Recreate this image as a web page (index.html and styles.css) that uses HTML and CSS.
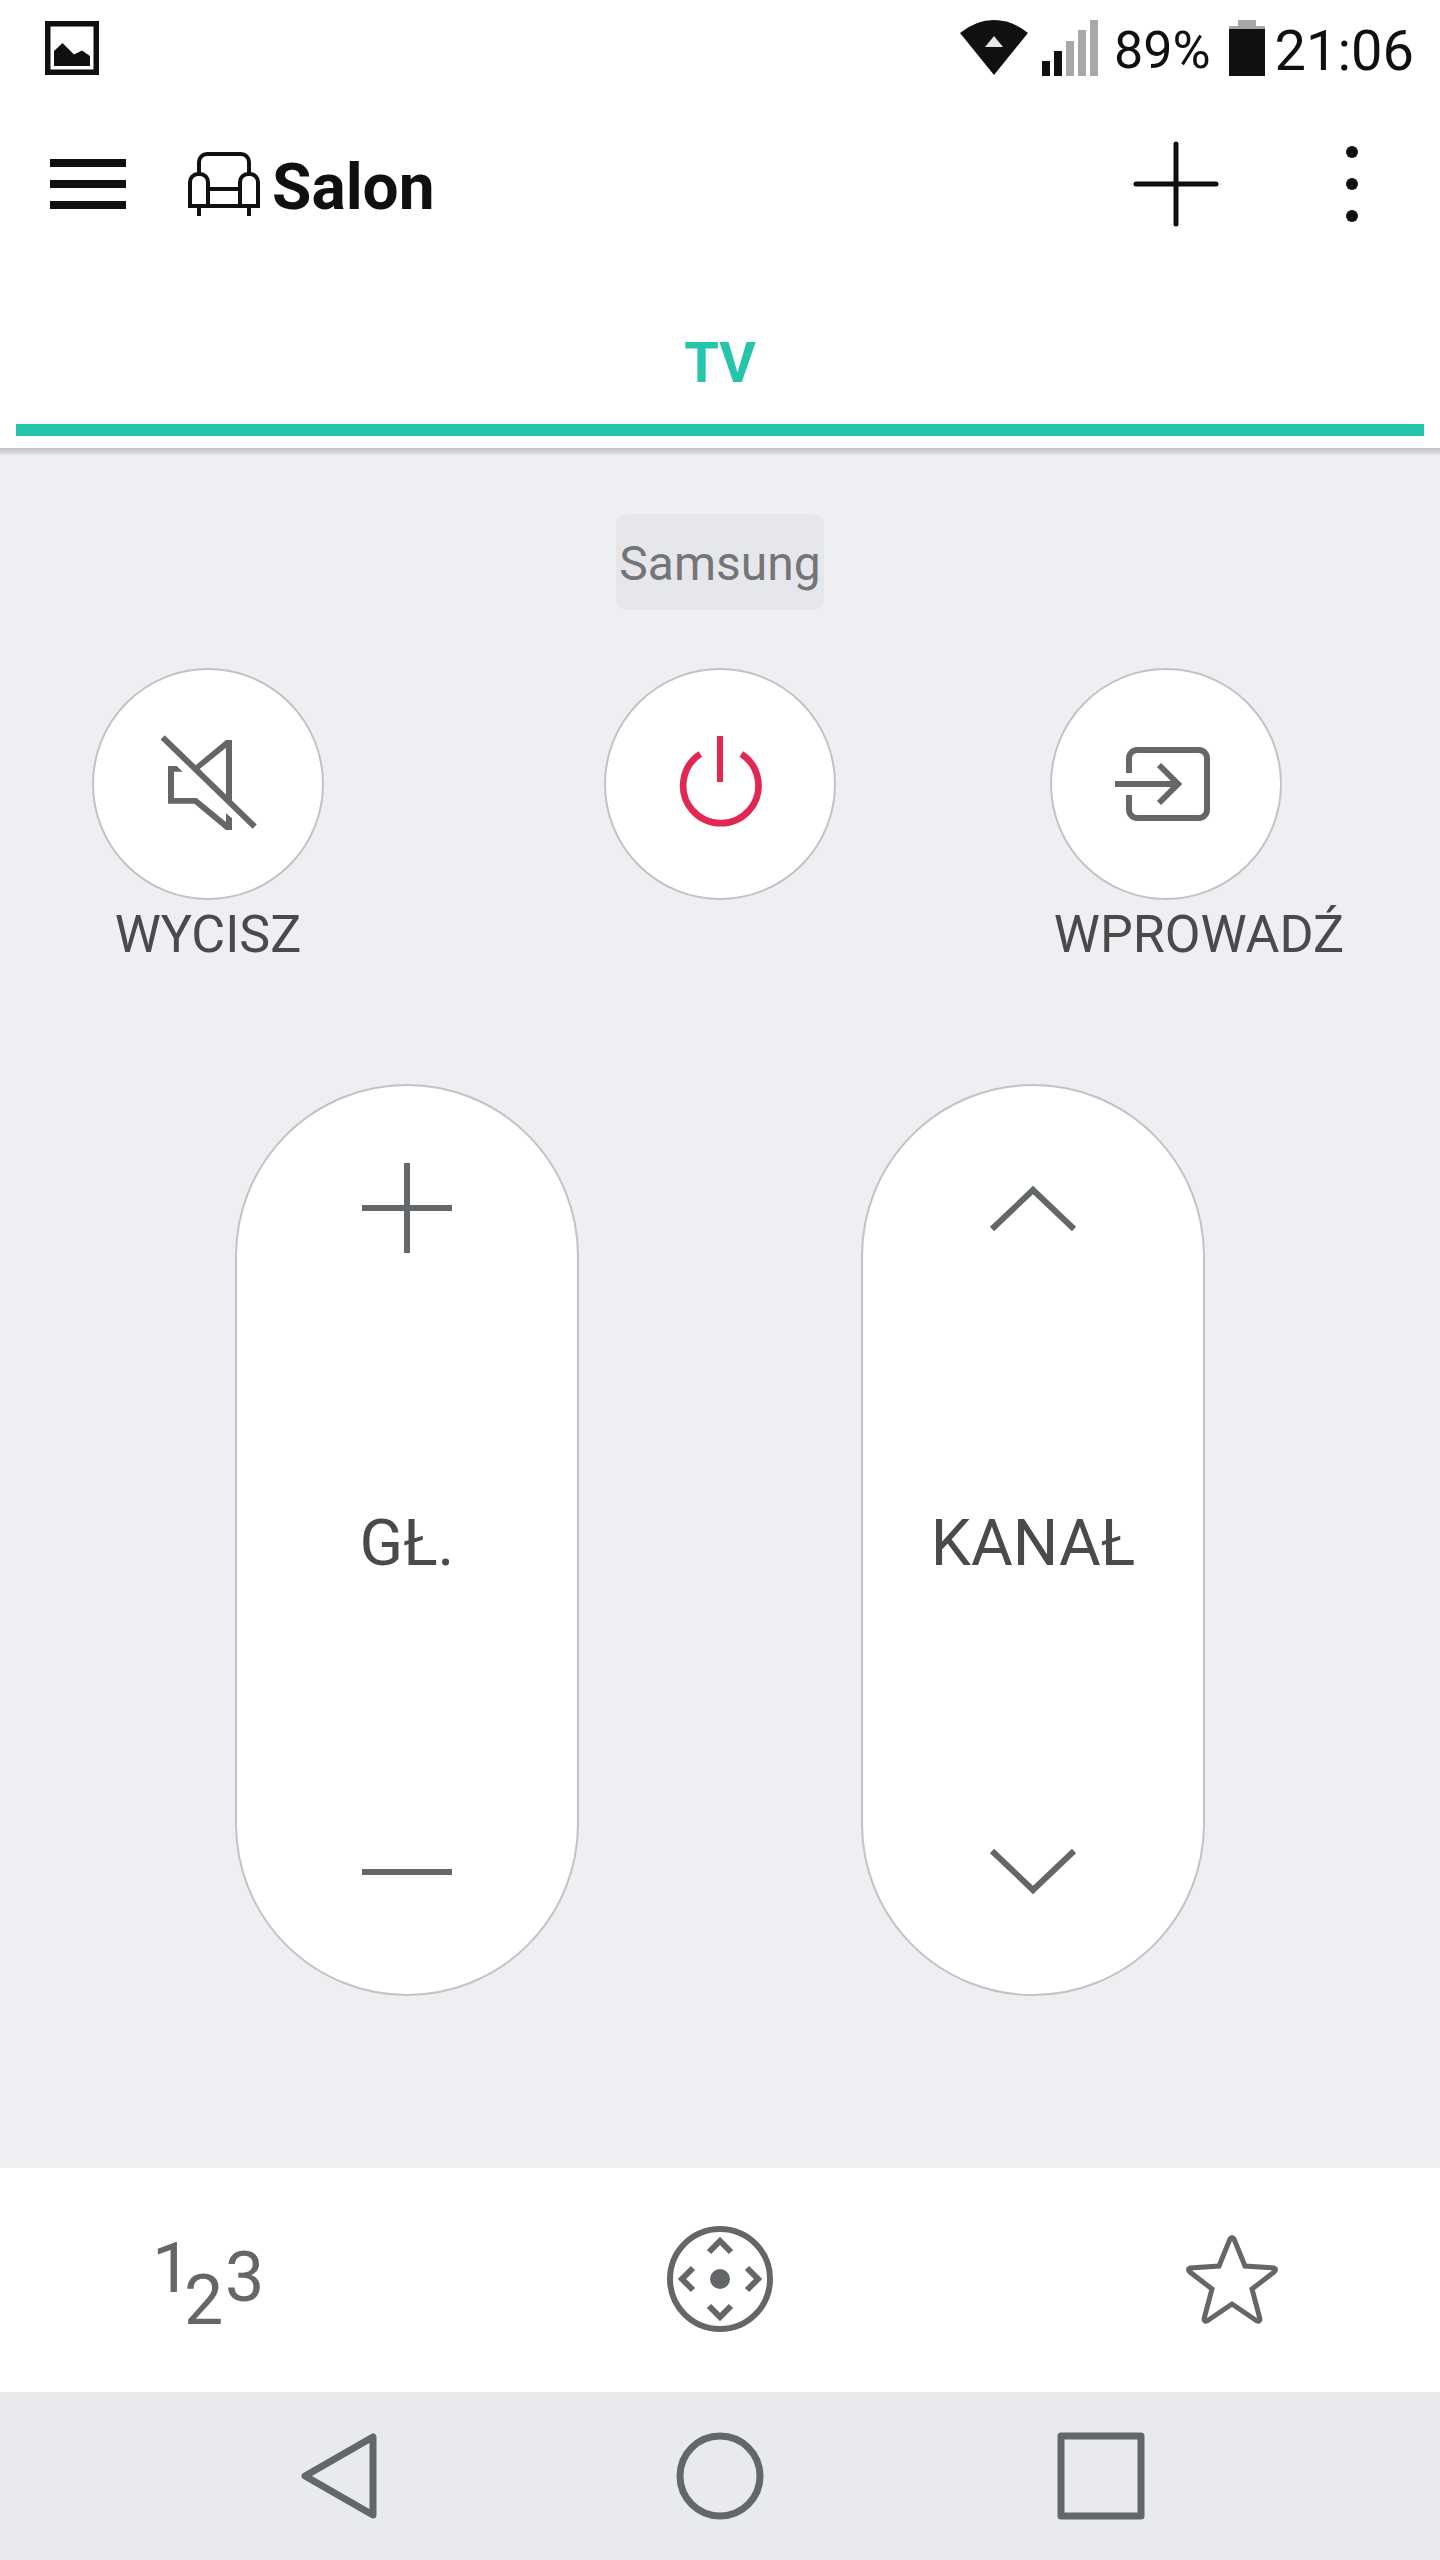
FILE: index.html
```html
<!DOCTYPE html>
<html lang="pl">
<head>
<meta charset="utf-8">
<meta name="viewport" content="width=device-width, initial-scale=1">
<title>Salon</title>
<link rel="stylesheet" href="styles.css">
</head>
<body>
<div class="screen">
  <header class="header">
    <div class="status">
      <svg class="status-photo" width="54" height="54" viewBox="0 0 54 54" aria-hidden="true">
        <rect x="2.75" y="2.75" width="48.5" height="48.5" fill="none" stroke="currentColor" stroke-width="5.5"/>
        <path d="M9 45V30l8.500-8L29 33.500l8-4 8 5.500v10z" fill="currentColor"/>
      </svg>
      <div class="status-info">
        <svg width="68" height="56" viewBox="0 0 68 56" aria-hidden="true">
          <path d="M0 13Q16 0 34 0T68 13L34 55z" fill="currentColor"/>
          <path d="M34 16l9 11H25z" fill="#e5e6ea"/>
        </svg>
        <svg class="signal" width="56" height="56" viewBox="0 0 56 56" aria-hidden="true">
          <path d="M0 41h8v15H0zM12 31h8v25h-8z" fill="currentColor"/>
          <path d="M24 21h8v35h-8zM36 10h8v46h-8zM48 0h8v56h-8z" fill="#a6a7a7"/>
        </svg>
        <span class="percent">89%</span>
        <svg class="battery" width="36" height="56" viewBox="0 0 36 56" aria-hidden="true">
          <path d="M9 0h18v6h9v4H0V6h9z" fill="#a6a7a7"/>
          <path d="M0 9h36v47H0z" fill="currentColor"/>
        </svg>
        <span class="clock">21:06</span>
      </div>
    </div>
    <div class="appbar">
      <button class="icon-button" type="button" aria-label="Menu">
        <svg width="76" height="52" viewBox="0 0 76 52"><path d="M0 1h76v8H0zM0 22h76v8H0zM0 43h76v8H0z" fill="currentColor"/></svg>
      </button>
      <h1 class="title">
        <svg width="72" height="64" viewBox="0 0 72 64" fill="none" stroke="currentColor" stroke-width="4" aria-hidden="true">
          <path d="M11 21V10a8 8 0 0 1 8-8h34a8 8 0 0 1 8 8v11M2 54V30a8 8 0 0 1 8-8h2a8 8 0 0 1 8 8v24M52 54V30a8 8 0 0 1 8-8h2a8 8 0 0 1 8 8v24M20 37h32M0 54h72M11 54v10M61 54v10"/>
        </svg>
        <span>Salon</span>
      </h1>
      <button class="icon-button" type="button" aria-label="Dodaj">
        <svg width="86" height="86" viewBox="0 0 86 86"><path d="M43 3v80M3 43h80" fill="none" stroke="currentColor" stroke-width="5" stroke-linecap="round"/></svg>
      </button>
      <button class="icon-button more" type="button" aria-label="Więcej">
        <svg width="12" height="76" viewBox="0 0 12 76" fill="currentColor"><circle cx="6" cy="6" r="6"/><circle cx="6" cy="38" r="6"/><circle cx="6" cy="70" r="6"/></svg>
      </button>
    </div>
    <div class="tabs">
      <button class="tab" type="button">TV</button>
    </div>
  </header>

  <main class="remote">
    <div class="brand">Samsung</div>
    <div class="actions">
      <div class="action">
        <button class="round" type="button" aria-labelledby="mute">
          <svg class="glyph" viewBox="270 288 288 288" fill="currentColor">
            <path d="M468 300h18v184l-18-18V323l-80 65-14-10zM294 378h26l18 17h-26v79h68l88 72v-26l18 15v35h-18l-95-79h-79z"/>
            <path d="M278 292L554 560" stroke="currentColor" stroke-width="18"/>
          </svg>
        </button>
        <span class="action-label" id="mute">WYCISZ</span>
      </div>
      <div class="action">
        <button class="round power" type="button" aria-label="Zasilanie">
          <svg class="glyph" viewBox="276 258 288 288" fill="none" stroke="currentColor">
            <path d="M361 312A113 113 0 1 0 484 312" stroke-width="20"/>
            <path d="M420 258V396" stroke-width="18"/>
          </svg>
        </button>
      </div>
      <div class="action action-wide">
        <button class="round" type="button" aria-labelledby="input">
          <svg class="glyph" viewBox="264 288 288 288" fill="none" stroke="currentColor" stroke-width="18">
            <path d="M297 399V355a25 25 0 0 1 25-25H506a25 25 0 0 1 25 25V509a25 25 0 0 1-25 25H322a25 25 0 0 1-25-25V465M255 432H444M387 375l57 57-57 57"/>
          </svg>
        </button>
        <span class="action-label" id="input">WPROWADŹ</span>
      </div>
    </div>

    <div class="rockers">
      <div class="rocker" role="group" aria-label="Głośność">
        <button class="rocker-button" type="button" aria-label="Głośniej">
          <svg width="90" height="90" viewBox="0 0 90 90"><path d="M45 0v90M0 45h90"/></svg>
        </button>
        <span class="rocker-label">GŁ.</span>
        <button class="rocker-button" type="button" aria-label="Ciszej">
          <svg width="90" height="90" viewBox="0 0 90 90"><path d="M0 45h90"/></svg>
        </button>
      </div>
      <div class="rocker" role="group" aria-label="Kanał">
        <button class="rocker-button" type="button" aria-label="Następny kanał">
          <svg width="90" height="90" viewBox="0 0 90 90"><path d="M4 66l41-39 41 39"/></svg>
        </button>
        <span class="rocker-label">KANAŁ</span>
        <button class="rocker-button" type="button" aria-label="Poprzedni kanał">
          <svg width="90" height="90" viewBox="0 0 90 90"><path d="M4 24l41 39 41-39"/></svg>
        </button>
      </div>
    </div>
  </main>

  <nav class="modes" aria-label="Tryby pilota">
    <button class="icon-button" type="button" aria-label="Klawiatura numeryczna">
      <svg width="112" height="112" viewBox="152 2224 112 112" class="digits"><text x="152" y="2293">1</text><text x="184" y="2325">2</text><text x="225" y="2302">3</text></svg>
    </button>
    <button class="icon-button" type="button" aria-label="Nawigacja">
      <svg width="112" height="112" viewBox="-56 -56 112 112" fill="none" stroke="currentColor" stroke-width="6">
        <circle r="50"/>
        <circle r="10" fill="currentColor" stroke="none"/>
        <path d="M-11-27L0-38 11-27M-11 27L0 38 11 27M-27-11L-38 0-27 11M27-11L38 0 27 11"/>
      </svg>
    </button>
    <button class="icon-button" type="button" aria-label="Ulubione">
      <svg width="112" height="112" viewBox="1176 2223 112 112" fill="none" stroke="currentColor" stroke-width="5">
        <path d="M1230 2239Q1232 2236 1234 2239L1245 2266 1274 2268Q1277 2269 1274 2272L1252 2289 1260 2319Q1260 2322 1257 2321L1232 2304 1207 2321Q1204 2322 1204 2319L1212 2289 1190 2272Q1187 2269 1190 2268L1219 2266Z"/>
      </svg>
    </button>
  </nav>

  <nav class="system" aria-label="System">
    <button class="icon-button" type="button" aria-label="Wstecz">
      <svg width="88" height="88" viewBox="0 0 88 88"><path d="M10 44L78 5V83z"/></svg>
    </button>
    <button class="icon-button" type="button" aria-label="Ekran główny">
      <svg width="88" height="88" viewBox="0 0 88 88"><circle cx="44" cy="44" r="40"/></svg>
    </button>
    <button class="icon-button" type="button" aria-label="Ostatnie aplikacje">
      <svg width="88" height="88" viewBox="0 0 88 88"><path d="M4 4h80v80H4z"/></svg>
    </button>
  </nav>
</div>
</body>
</html>
```
FILE: styles.css
```css
* {
  box-sizing: border-box;
}

body {
  margin: 0;
  background: #eeeff3;
  color: #101010;
  font-family: Roboto, "Liberation Sans", sans-serif;
}

button {
  margin: 0;
  padding: 0;
  border: 0;
  background: none;
  color: inherit;
  font: inherit;
  cursor: pointer;
}

svg {
  display: block;
  flex: none;
}

.screen {
  display: flex;
  flex-direction: column;
  min-height: 100vh;
}

/* Header */

.header {
  background: #fff;
}

.status {
  display: flex;
  justify-content: space-between;
  align-items: center;
  height: 96px;
  padding: 0 26px 0 45px;
}

.status-info {
  display: flex;
  align-items: center;
}

.signal {
  margin: 0 16px 0 14px;
}

.percent {
  font-size: 52px;
  line-height: 64px;
  padding-top: 6px;
}

.battery {
  margin: 0 10px 0 18px;
}

.clock {
  font-size: 56px;
  line-height: 64px;
  padding-top: 6px;
}

.appbar {
  display: flex;
  align-items: center;
  height: 176px;
  padding: 0 82px 0 50px;
}

.icon-button {
  display: flex;
  align-items: center;
  justify-content: center;
}

.title {
  display: flex;
  flex: 1;
  align-items: center;
  gap: 12px;
  margin: 0 0 0 62px;
  font-size: 64px;
  font-weight: 700;
  line-height: 80px;
}

.title span {
  padding-top: 8px;
}

.more {
  margin-left: 127px;
}

.tabs {
  display: flex;
  padding: 0 16px 12px;
}

.tab {
  flex: 1;
  height: 164px;
  padding-top: 30px;
  border-bottom: 12px solid #27c4ac;
  color: #27c4ac;
  font-size: 56px;
  font-weight: 700;
}

/* Remote */

.remote {
  display: flex;
  flex: 1;
  flex-direction: column;
  padding: 66px 0 172px;
  background: linear-gradient(#c1c1c3, #d2d3d6 4px, #eeeff3 8px);
}

.brand {
  align-self: center;
  padding: 4px 3px 0;
  border-radius: 10px;
  background: #e6e7ea;
  color: #747578;
  font-size: 48px;
  line-height: 92px;
}

.actions {
  display: grid;
  grid-template-columns: 1fr auto 1fr;
  margin-top: 58px;
  padding: 0 92px;
}

.action {
  display: flex;
  flex-direction: column;
  align-items: center;
  justify-self: start;
  color: #4a4a4a;
  font-size: 52px;
  line-height: 70px;
}

.action-wide {
  width: 298px;
  justify-self: end;
}

.action-wide .round {
  align-self: flex-start;
}

.round {
  display: flex;
  align-items: center;
  justify-content: center;
  width: 232px;
  height: 232px;
  border: 2px solid #c2c3c4;
  border-radius: 50%;
  background: #fff;
  color: #646769;
}

.power {
  color: #e12855;
}

.glyph {
  width: 96px;
  height: 96px;
  overflow: visible;
}

.rockers {
  display: flex;
  flex: 1;
  justify-content: space-between;
  margin-top: 114px;
  padding: 0 235px;
}

.rocker {
  display: flex;
  flex-direction: column;
  align-items: center;
  justify-content: space-between;
  width: 344px;
  border: 2px solid #c2c3c4;
  border-radius: 172px;
  background: #fff;
}

.rocker-button {
  display: flex;
  align-items: center;
  justify-content: center;
  width: 100%;
  height: 244px;
  color: #646769;
}

.rocker-button path {
  fill: none;
  stroke: currentColor;
  stroke-width: 6px;
}

.rocker-label {
  padding-top: 8px;
  color: #4a4a4a;
  font-size: 64px;
  line-height: 80px;
}

/* Bottom bars */

.modes {
  display: flex;
  justify-content: space-between;
  padding: 55px 152px 57px;
  background: #fff;
  color: #646769;
}

.digits {
  overflow: visible;
  fill: currentColor;
  font-size: 70px;
}

.system {
  display: flex;
  justify-content: space-between;
  padding: 40px 295px;
  background: #e9eaee;
  color: #646769;
}

.system svg {
  fill: none;
  stroke: currentColor;
  stroke-width: 7px;
  stroke-linejoin: round;
}
```
